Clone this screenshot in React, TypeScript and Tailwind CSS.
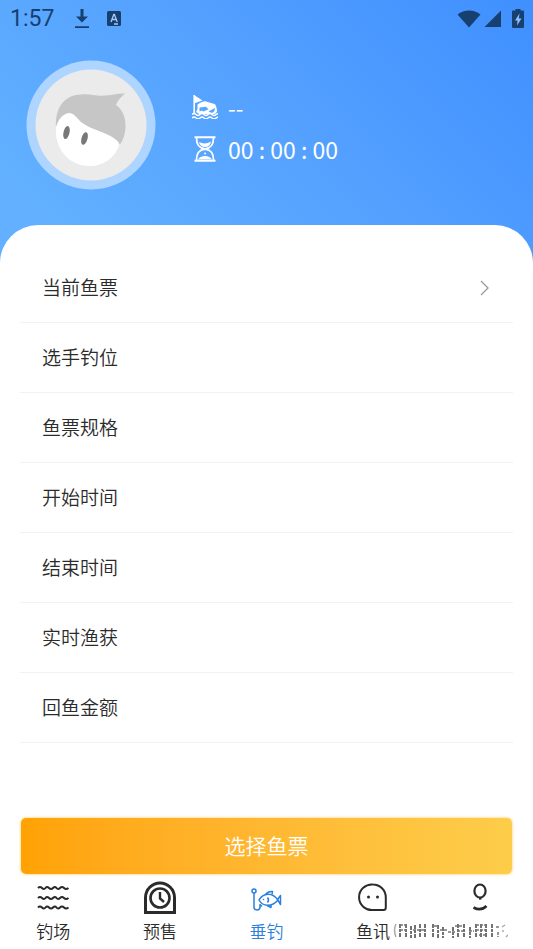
import type { ReactNode } from "react";

const rows = ["当前鱼票", "选手钓位", "鱼票规格", "开始时间", "结束时间", "实时渔获", "回鱼金额"];

function StatusBar() {
  return (
    <div className="flex h-9 items-center justify-between pt-px pr-[9px] pl-[10px] text-[#174071]">
      <div className="flex items-center">
        <span className="w-16 font-[Roboto,sans-serif] text-[23px] leading-9 font-normal">1:57</span>
        <svg className="h-5 w-4" viewBox="0 0 16 20" fill="currentColor" aria-hidden="true">
          <path d="M6.500 0h3v7.500H14l-6 6-6-6h4.500zM1 17.200h14V19H1z" />
        </svg>
        <svg className="ml-[17px] h-4 w-[14px]" viewBox="0 0 14 16" aria-hidden="true">
          <rect width="14" height="15" y="0" rx="1.500" fill="currentColor" />
          <path d="M4 11 6.800 3.500h.6l2.800 7.500M5 8.500h4.200M7 13h4" fill="none" stroke="#a5cdfa" strokeWidth="1.300" />
        </svg>
      </div>
      <div className="flex items-center">
        <svg className="h-[18px] w-6" viewBox="0 0 24 18" fill="currentColor" aria-hidden="true">
          <path d="M.5 4.500C7-1 17-1 23.500 4.500L12 17.500z" />
        </svg>
        <svg className="ml-[3px] h-[18px] w-[18px]" viewBox="0 0 18 18" fill="currentColor" aria-hidden="true">
          <path d="M17 .5v16.500H.5z" />
        </svg>
        <svg className="ml-[10px] h-5 w-3" viewBox="0 0 12 20" aria-hidden="true">
          <path d="M3.500 0h5v1.500H11q1 0 1 1v15.500q0 1-1 1H1q-1 0-1-1V2.500q0-1 1-1h2.500z" fill="currentColor" />
          <path d="M7.500 4.500 3 11.500h2.500L5 16.500l4.500-7H6.800z" fill="#8fc0fa" />
        </svg>
      </div>
    </div>
  );
}

function Avatar() {
  return (
    <svg className="size-[130px]" viewBox="0 0 130 130" role="img" aria-label="头像">
      <circle cx="65" cy="65" r="64.500" fill="#aed5ff" />
      <circle cx="65" cy="65" r="55.500" fill="#ebebeb" />
      <path d="M30 66C28 88 42 106 64 106C78 106 88 98 93 86L92 74L50 48H40z" fill="#fff" />
      <path d="M30 67C29 48 38 35 55 34.500C65 33.500 70 36.500 78 35.500C86 35.500 92 33 99 33.500C94 38 91 41 90 45C102 53 102 74 94 84.500C88 73 66 71 55 62C50 57 48 53 43 53C36 54 32 60 30 67z" fill="#c6c6c6" />
      <ellipse cx="40.500" cy="72.500" rx="3" ry="6.700" transform="rotate(12 40.500 72.500)" fill="#777" />
      <ellipse cx="58.500" cy="78.500" rx="3" ry="6.500" transform="rotate(16 58.500 78.500)" fill="#777" />
    </svg>
  );
}

function SpotIcon() {
  return (
    <svg className="h-6 w-[26px]" viewBox="0 0 26 24" fill="none" aria-hidden="true">
      <path d="M2.200 0v19" stroke="#fff" strokeWidth="1.600" />
      <path d="M2 0l8.500 5.500L2 8.500z" fill="#fff" />
      <path d="M5.500 9.500Q12 5.500 14 6.500l8.500 2.500q2 1 2.500 7.500l-2 2.500H7l-3-2 1.500-3z" fill="#fff" />
      <path d="M7.500 12.500l6.500-.8 2.500 2.500-5 2.300-1.500-1-2.500 1zM16.500 16.500l6.500-3.500q0 3-2 4.500-3 .5-4.500-1z" fill="#58a5ff" />
      <path d="M0 19.500q2-2 4 0t4 0 4 0 4 0 4 0 4 0l2-1M0 23q2-2 4 0t4 0 4 0 4 0 4 0 4 0l2-1" stroke="#fff" strokeWidth="1.400" />
    </svg>
  );
}

function HourglassIcon() {
  return (
    <svg className="h-[26px] w-[26px]" viewBox="0 0 26 26" fill="none" stroke="#fff" aria-hidden="true">
      <path d="M2.500 1.300h21M2.500 24.700h21" strokeWidth="2" />
      <path d="M4.500 2C4.500 9 7 12 13 13C19 12 21.500 9 21.500 2M4.500 24C4.500 17 7 14 13 13C19 14 21.500 17 21.500 24" strokeWidth="1.800" />
      <path d="M7 6q6 3 12-.5-1 5.500-6 5.500T7 6zM6 23.500q2-3.500 7-3.500t7 3.500z" fill="#fff" stroke="none" />
      <circle cx="13" cy="17.500" r="1" fill="#fff" stroke="none" />
    </svg>
  );
}

function WavesIcon() {
  return (
    <svg className="size-9" viewBox="0 0 36 36" fill="none" stroke="currentColor" strokeWidth="2" aria-hidden="true">
      <path d="M3 7q2-2 4 0t3.500 0 3.500 0 4 0 3.500 0 3.500 0 4 0 4.500 0M3 17q2-2 4 0t3.500 0 3.500 0 4 0 3.500 0 3.500 0 4 0 4.500 0M3 26.500q2-2 4 0t3.500 0 3.500 0 4 0 3.500 0 3.500 0 4 0 4.500 0" />
    </svg>
  );
}

function PresaleIcon() {
  return (
    <svg className="size-9" viewBox="0 0 36 36" fill="none" stroke="currentColor" strokeWidth="3" aria-hidden="true">
      <path d="M3.500 31.500V16.500a14.500 14.500 0 0 1 29 0v15z" />
      <circle cx="18" cy="17" r="9.500" strokeWidth="2.600" />
      <path d="M18 11v6.500l4 3.500" strokeWidth="2.400" />
    </svg>
  );
}

function FishingIcon() {
  return (
    <svg className="size-9" viewBox="0 0 36 36" fill="none" stroke="currentColor" strokeWidth="1.500" strokeLinejoin="round" aria-hidden="true">
      <circle cx="6" cy="10" r="2" />
      <path d="M6 12v14c0 4 6 4 6 0v-2.500l2 2" />
      <path d="M11 19c4-7 13-8.500 19 0-6 7-15 7-19 0z" />
      <path d="M17.500 13.500q3-3.500 7-3l-.5 3M19 24.500l4 2v-2.500M29.500 18.500l3-4v9zM19.500 16.500q2 2.500 0 5" />
      <circle cx="15.500" cy="18.500" r=".8" fill="currentColor" stroke="none" />
    </svg>
  );
}

function NewsIcon() {
  return (
    <svg className="size-9" viewBox="0 0 36 36" fill="none" stroke="currentColor" strokeWidth="2" aria-hidden="true">
      <path d="M18 3.500A12.800 12.800 0 1 0 18 29h10.500q2.300 0 2.300-2.500V16.500A12.800 13 0 0 0 18 3.500z" />
      <circle cx="13.500" cy="16" r="1.500" fill="currentColor" stroke="none" />
      <circle cx="22.500" cy="16" r="1.500" fill="currentColor" stroke="none" />
    </svg>
  );
}

function ProfileIcon() {
  return (
    <svg className="size-9" viewBox="0 0 36 36" fill="none" stroke="currentColor" strokeWidth="2.200" aria-hidden="true">
      <ellipse cx="18" cy="10" rx="5.600" ry="6.500" />
      <path d="M17 17.500h2.500" />
      <path d="M11.500 26.500q7.500 4 13-1.500" strokeWidth="2.600" />
    </svg>
  );
}

function WornStrip() {
  return (
    <svg
      className="pointer-events-none absolute right-[25px] bottom-[9px] h-[18px] w-[115px]"
      viewBox="0 0 115 18"
      fill="none"
      stroke="#444"
      strokeWidth="1.500"
      aria-hidden="true"
    >
      <path d="M3 2q-3 6 0 13M112 3l-3 2M110 8v2M115 13l-2 2" stroke="#aaa" />
      <path
        d="M7 2v14M13 2v14M18 4v12M22 3v13M27 2v14M32 2v14M40 2v14M45 3v13M50 5v11M60 5v11M65 2v14M71 2v14M77 5v11M83 2v14M88 2v14M93 2v14M99 2v14"
        strokeDasharray="4 1 3 1"
      />
      <path d="M7 3h6M7 8h6M20 8h6M28 8h5M41 4h5M47 8h7M55 10h7M62 4h7M64 9h7M76 9h5M83 3h10M83 8h10M86 13h6M103 5h3M105 10v5" stroke="#777" strokeDasharray="3 1" />
    </svg>
  );
}

function Tab({ icon, label, active = false, worn = false }: { icon: ReactNode; label: string; active?: boolean; worn?: boolean }) {
  return (
    <a
      href="#"
      aria-current={active ? "page" : undefined}
      aria-label={label}
      className={`flex flex-1 flex-col items-center ${active ? "text-[#2b80dc]" : "text-[#2b2b2b]"}`}
    >
      {icon}
      <span className="h-7 text-[17px] leading-7">{worn ? "" : label}</span>
    </a>
  );
}

export default function App() {
  return (
    <div className="flex min-h-screen flex-col bg-white font-['Noto_Sans_CJK_SC_DemiLight','Noto_Sans_CJK_SC',sans-serif] font-[350]">
      <header className="bg-linear-225 from-[#3f8fff] via-[#54a1ff] via-45% to-[#62b0ff] to-85% pb-9">
        <StatusBar />
        <div className="flex items-center gap-9 pt-6 pb-[71px] pl-[26px]">
          <Avatar />
          <div className="flex flex-col gap-2 pt-[6px] font-['Noto_Sans_CJK_SC',sans-serif] font-normal text-white">
            <div className="flex h-[34px] items-center gap-[10px]">
              <SpotIcon />
              <span className="text-[22px] leading-8">--</span>
            </div>
            <div className="flex h-[34px] items-center gap-[10px]">
              <HourglassIcon />
              <span className="text-[23px] leading-8">00 : 00 : 00</span>
            </div>
          </div>
        </div>
      </header>
      <main className="-mt-[72px] flex-1 rounded-t-[38px] bg-white px-5 pt-7">
        <ul>
          {rows.map((label, i) => (
            <li key={label} className="border-b border-[#f2f2f2] text-[19px] text-[#2b2b2b]">
              {i === 0 ? (
                <button className="flex h-[69px] w-full items-center justify-between pr-6 pl-[22px]">
                  {label}
                  <svg className="h-4 w-[9px]" viewBox="0 0 9 16" fill="none" stroke="#999" strokeWidth="1.300" aria-hidden="true">
                    <path d="M1 1l7 7-7 7" />
                  </svg>
                </button>
              ) : (
                <div className="flex h-[69px] items-center pl-[22px]">{label}</div>
              )}
            </li>
          ))}
        </ul>
      </main>
      <footer>
        <div className="px-[21px]">
          <button className="h-14 w-full rounded-[5px] bg-linear-to-r from-[#ffa203] to-[#fdcd4a] text-[21px] text-white shadow-[0_0_3px_#ffc04a]">
            选择鱼票
          </button>
        </div>
        <nav className="relative flex pt-[7px] pb-1">
          <Tab icon={<WavesIcon />} label="钓场" />
          <Tab icon={<PresaleIcon />} label="预售" />
          <Tab icon={<FishingIcon />} label="垂钓" active />
          <Tab icon={<NewsIcon />} label="鱼讯" />
          <Tab icon={<ProfileIcon />} label="我的" worn />
          <WornStrip />
        </nav>
      </footer>
    </div>
  );
}
